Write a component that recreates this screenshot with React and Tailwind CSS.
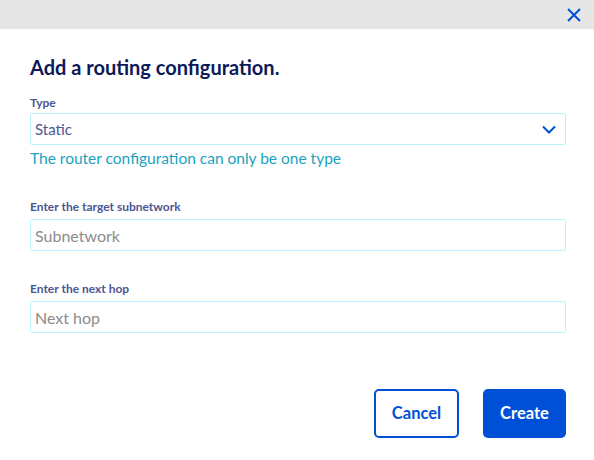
import React from 'react';

const font = { fontFamily: 'Lato, "Noto Sans", sans-serif' };

function Field({ label, placeholder, className = '' }) {
  return (
    <div className={className}>
      <label className="block h-[14px] text-[12px] font-bold leading-[14px] text-[#4d5592]">{label}</label>
      <input
        className="mt-[5px] block h-[32px] w-full rounded-[2px] border border-[#bef1ff] px-[4px] text-[16px] text-[#4d5592] outline-none placeholder:text-[#8c8c8c]"
        placeholder={placeholder}
      />
    </div>
  );
}

export default function App() {
  const [type, setType] = React.useState('Static');

  return (
    <div className="h-[460px] w-[594px] overflow-hidden bg-white" style={font}>
      {/* top bar with close button */}
      <div className="flex h-[29px] items-center justify-end bg-[#e6e6e6] pr-[10px]">
        <button className="flex h-[20px] w-[20px] items-center justify-center text-[#0050d7]">
          <svg width="14" height="14" viewBox="0 0 14 14" fill="none" stroke="currentColor" strokeWidth="2">
            <path d="M1 1l12 12M13 1L1 13" />
          </svg>
        </button>
      </div>

      <div className="pl-[30px] pr-[28px]">
        <h1 className="mt-[26px] h-[24px] text-[20px] font-bold leading-[24px] text-[#0c1a58]">
          Add a routing configuration.
        </h1>

        <div className="mt-[17px]">
          <label className="block h-[14px] text-[12px] font-bold leading-[14px] text-[#4d5592]">Type</label>
          <div className="relative mt-[3px]">
            <select
              value={type}
              onChange={(e) => setType(e.target.value)}
              className="block h-[32px] w-full appearance-none rounded-[2px] border border-[#bef1ff] bg-white px-[4px] text-[15px] text-[#4d5592] outline-none"
            >
              <option>Static</option>
              <option>Dynamic</option>
            </select>
            <svg
              className="pointer-events-none absolute right-[10px] top-[12px] text-[#0050d7]"
              width="14" height="9" viewBox="0 0 14 9" fill="none" stroke="currentColor" strokeWidth="2"
            >
              <path d="M1 1.5l6 6 6-6" />
            </svg>
          </div>
          <p className="mt-[3px] h-[20px] text-[15.5px] leading-[20px] text-[#1aa3c0]">
            The router configuration can only be one type
          </p>
        </div>

        <Field className="mt-[32px]" label="Enter the target subnetwork" placeholder="Subnetwork" />
        <Field className="mt-[31px]" label="Enter the next hop" placeholder="Next hop" />

        <div className="mt-[56px] flex justify-end gap-[24px]">
          <button className="h-[49px] w-[85px] rounded-[5px] border-2 border-[#0050d7] bg-white text-[16.5px] font-bold text-[#0050d7]">
            Cancel
          </button>
          <button className="h-[49px] w-[83px] rounded-[5px] bg-[#0050d7] text-[16.5px] font-bold text-white">
            Create
          </button>
        </div>
      </div>
    </div>
  );
}
